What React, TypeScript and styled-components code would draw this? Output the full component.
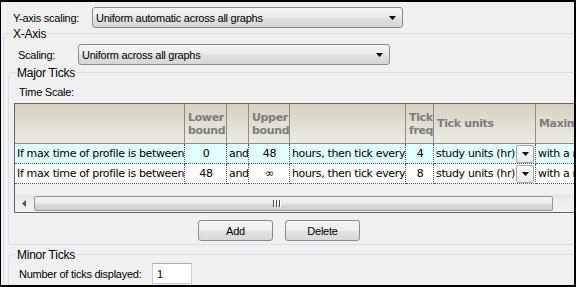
import React from 'react';
import styled, {createGlobalStyle} from 'styled-components';

const GlobalStyle = createGlobalStyle`
  html, body {
    margin: 0;
    padding: 0;
    background: #ffffff;
  }
  body {
    font-family: "Liberation Sans", Arial, sans-serif;
    font-size: 11px;
    letter-spacing: -0.25px;
    color: #000000;
  }
`;

const Frame = styled.div`
  width: 576px;
  height: 287px;
  box-sizing: border-box;
  border: solid #000000;
  border-width: 2px 2px 2px 1px;
  background: #f0f0f0;
  overflow: hidden;
`;

const Row = styled.div<{$top: number; $left: number; $label: number}>`
  display: flex;
  align-items: center;
  padding: ${p => p.$top}px 0 0 ${p => p.$left}px;
  > span {
    width: ${p => p.$label}px;
    flex: none;
    white-space: nowrap;
  }
`;

const Combo = styled.div<{$w: number}>`
  width: ${p => p.$w}px;
  height: 21px;
  box-sizing: border-box;
  border: 1px solid #8a8a8a;
  border-radius: 3px;
  background: linear-gradient(#f4f4f4 0%, #ececec 45%, #e0e0e0 55%, #d6d6d6 100%);
  display: flex;
  align-items: center;
  justify-content: space-between;
  padding: 0 6px 0 3px;
  white-space: nowrap;
`;

const Group = styled.fieldset<{$left: number; $top: number; $bottom: number; $w: number}>`
  margin: ${p => p.$top}px 0 0 ${p => p.$left}px;
  padding: 0 0 ${p => p.$bottom}px 0;
  width: ${p => p.$w}px;
  min-width: 0;
  box-sizing: border-box;
  border: 1px solid #d5dfe5;
  border-radius: 4px;
  > legend {
    margin-left: ${p => p.$left > 3 ? 7 : 8}px;
    padding: 2px 1px 0;
    line-height: 11px;
    font-size: 12px;
    white-space: nowrap;
  }
`;

const Caption = styled.div`
  padding: 7px 0 0 10px;
  height: 17px;
`;

const Table = styled.div`
  margin: 0 0 0 5px;
  width: 600px;
  border: 1px solid #646464;
  background: #f0f0f0;
  font-family: "DejaVu Sans", Verdana, sans-serif;
  font-size: 11px;
  letter-spacing: -0.35px;
`;

const Cols = styled.div`
  display: grid;
  grid-template-columns: 170px 42px 22px 41px 116px 28px 102px 80px;
`;

const Head = styled.div`
  height: 40px;
  box-sizing: border-box;
  border-right: 1px solid #8c8c8c;
  border-bottom: 1px solid #8c8c8c;
  background: linear-gradient(#d5d1c3, #ecebe0);
  color: #7c7c7c;
  font-weight: bold;
  line-height: 13px;
  padding: 0 1px 0 3px;
  display: flex;
  align-items: center;
  overflow: hidden;
  white-space: nowrap;
`;

const Cell = styled.div<{$alt?: boolean; $center?: boolean}>`
  height: 20px;
  box-sizing: border-box;
  border-right: 1px dotted #555555;
  border-bottom: 1px dotted #555555;
  background: ${p => p.$alt ? '#ffffff' : '#e0ffff'};
  display: flex;
  align-items: center;
  justify-content: ${p => p.$center ? 'center' : 'space-between'};
  padding: 0 1px 0 2px;
  white-space: nowrap;
  overflow: hidden;
`;

const DropButton = styled.div`
  width: 18px;
  height: 18px;
  box-sizing: border-box;
  border: 1px solid #a8a8a8;
  border-radius: 2px;
  background: linear-gradient(#fbfbfb, #e9e9e9);
  display: flex;
  align-items: center;
  justify-content: center;
  flex: none;
`;

const Filler = styled.div`
  height: 11px;
`;

const ScrollBar = styled.div`
  height: 17px;
  display: flex;
  align-items: center;
  background: linear-gradient(#e2e2e2, #eeeeee 30%, #f2f2f2);
`;

const ScrollArrow = styled.div`
  width: 17px;
  height: 17px;
  display: flex;
  align-items: center;
  justify-content: center;
  flex: none;
`;

const Thumb = styled.div`
  margin-left: 2px;
  width: 519px;
  height: 15px;
  box-sizing: border-box;
  border: 1px solid #979797;
  border-radius: 2px;
  background: linear-gradient(#f4f4f4 0%, #e9e9e9 50%, #d9d9d9 51%, #d0d0d0 100%);
  display: flex;
  align-items: center;
  justify-content: center;
  padding-right: 34px;
  gap: 2px;
  > i {
    width: 1px;
    height: 7px;
    background: #4a4a4a;
    box-shadow: 1px 0 0 #ffffff;
  }
`;

const Buttons = styled.div`
  display: flex;
  gap: 12px;
  padding: 7px 0 0 189px;
`;

const Button = styled.div`
  width: 75px;
  height: 21px;
  box-sizing: border-box;
  border: 1px solid #8a8a8a;
  border-radius: 3px;
  background: linear-gradient(#f5f5f5 0%, #ededed 50%, #e2e2e2 51%, #d9d9d9 100%);
  display: flex;
  align-items: center;
  justify-content: center;
`;

const TextBox = styled.div`
  width: 40px;
  height: 21px;
  box-sizing: border-box;
  border: 1px solid #c7cdd5;
  border-top-color: #abadb3;
  background: #ffffff;
  padding: 0 4px;
  display: flex;
  align-items: center;
`;

const Down = () => (
  <svg width="7" height="4" viewBox="0 0 7 4">
    <polygon points="0,0 7,0 3.5,4" fill="#000" />
  </svg>
);

const Left = () => (
  <svg width="4" height="7" viewBox="0 0 4 7">
    <polygon points="4,0 4,7 0,3.5" fill="#505050" />
  </svg>
);

const rows = [
  {low: '0', high: '48', freq: '4'},
  {low: '48', high: '∞', freq: '8'},
];

const App = () => {
  return (
    <Frame>
      <GlobalStyle />
      <Row $top={5} $left={12} $label={79}>
        <span>Y-axis scaling:</span>
        <Combo $w={311}>
          Uniform automatic across all graphs
          <Down />
        </Combo>
      </Row>
      <Group $left={2} $top={-1} $bottom={0} $w={620}>
        <legend>X-Axis</legend>
        <Row $top={4} $left={14} $label={60}>
          <span>Scaling:</span>
          <Combo $w={312}>
            Uniform across all graphs
            <Down />
          </Combo>
        </Row>
        <Group $left={4} $top={1} $bottom={3} $w={605}>
          <legend>Major Ticks</legend>
          <Caption>Time Scale:</Caption>
          <Table>
            <Cols>
              <Head></Head>
              <Head>Lower<br />bound</Head>
              <Head></Head>
              <Head>Upper<br />bound</Head>
              <Head></Head>
              <Head>Tick<br />freq</Head>
              <Head>Tick units</Head>
              <Head>Maximum</Head>
              {rows.map((r, i) => (
                <React.Fragment key={i}>
                  <Cell $alt={i === 1}>If max time of profile is between</Cell>
                  <Cell $alt={i === 1} $center>{r.low}</Cell>
                  <Cell $alt={i === 1}>and</Cell>
                  <Cell $alt={i === 1} $center>{r.high}</Cell>
                  <Cell $alt={i === 1}>hours, then tick every</Cell>
                  <Cell $alt={i === 1} $center>{r.freq}</Cell>
                  <Cell $alt={i === 1}>study units (hr)<DropButton><Down /></DropButton></Cell>
                  <Cell $alt={i === 1}>with a maximum of</Cell>
                </React.Fragment>
              ))}
            </Cols>
            <Filler />
            <ScrollBar>
              <ScrollArrow><Left /></ScrollArrow>
              <Thumb><i /><i /><i /></Thumb>
            </ScrollBar>
          </Table>
          <Buttons>
            <Button>Add</Button>
            <Button>Delete</Button>
          </Buttons>
        </Group>
        <Group $left={4} $top={3} $bottom={10} $w={605}>
          <legend>Minor Ticks</legend>
          <Row $top={2} $left={10} $label={133}>
            <span>Number of ticks displayed:</span>
            <TextBox>1</TextBox>
          </Row>
        </Group>
      </Group>
    </Frame>
  );
};

export default App;
